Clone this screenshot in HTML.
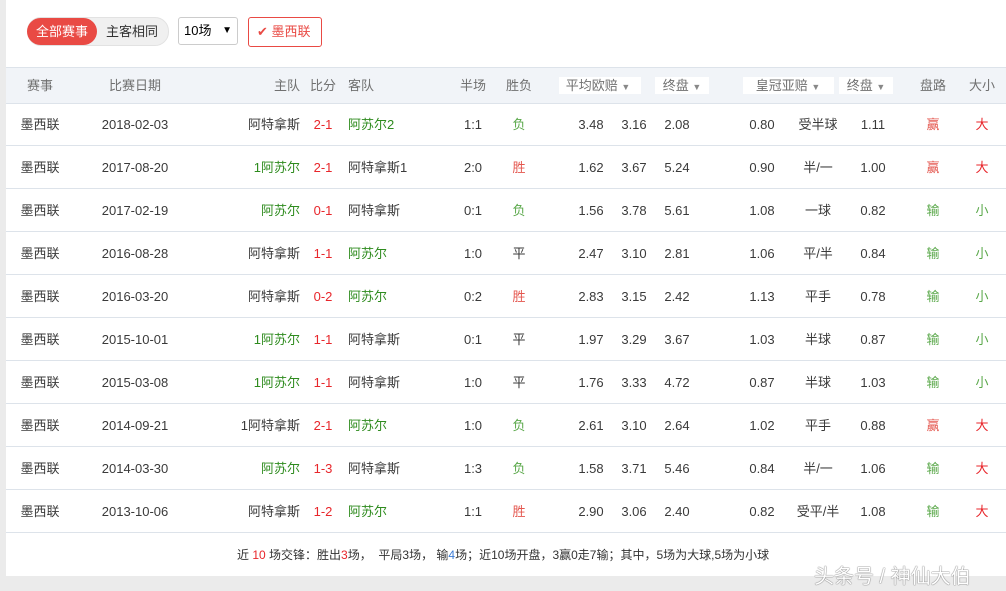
<!DOCTYPE html>
<html><head><meta charset="utf-8"><style>
body{margin:0;width:1006px;height:591px;background:#fff;font-family:"Liberation Sans","Noto Sans CJK SC",sans-serif;font-size:13px;color:#3a3a3a;position:relative;overflow:hidden}
.ab{position:absolute}
.lb{left:0;top:0;width:6px;height:591px;background:#ebebeb}
.bot{left:0;top:576px;width:1006px;height:15px;background:#ebebeb}
.hd{left:6px;top:67px;width:1000px;height:35px;background:#f1f4f8;border-top:1px solid #dde3ea;border-bottom:1px solid #dde3ea}
.row{position:absolute;left:6px;width:1000px;height:42px;border-bottom:1px solid #dde3ea}
.c{position:absolute;top:0;line-height:43px;white-space:nowrap;transform:translateX(-50%)}
.r{position:absolute;top:0;line-height:43px;white-space:nowrap;transform:translateX(-100%)}
.l{position:absolute;top:0;line-height:43px;white-space:nowrap}
.hd span{line-height:35px;color:#707070}
.g{color:#2e8b1e}.red{color:#e8262b}.rd2{color:#e4574f}.g2{color:#5aa84a}
.box{position:absolute;top:9px;height:17px;background:#fff}
small{color:#888}
</style></head><body>
<div class="ab lb"></div><div class="ab bot"></div>
<div class="ab" style="left:27px;top:17px;width:140px;height:27px;border-radius:14px;background:#f0f0f0;border:1px solid #e2e2e2"></div>
<div class="ab" style="left:27px;top:18px;width:70px;height:27px;border-radius:14px;background:#e94a44;color:#fff;line-height:27px;text-align:center">全部赛事</div>
<div class="ab" style="left:97px;top:18px;width:70px;line-height:27px;text-align:center;color:#333">主客相同</div>
<div class="ab" style="left:178px;top:17px;width:58px;height:26px;border:1px solid #ccc;border-radius:3px;line-height:26px;color:#000"><span style="margin-left:5px">10场</span><span style="position:absolute;right:5px;font-size:10px">▼</span></div>
<div class="ab" style="left:248px;top:17px;width:72px;height:28px;border:1px solid #e94a44;border-radius:3px;line-height:28px;color:#e94a44"><span style="margin-left:8px">✔</span> 墨西联</div>
<div class="ab hd">
<span class="c" style="left:34px">赛事</span><span class="c" style="left:129px">比赛日期</span><span class="r" style="left:294px">主队</span><span class="c" style="left:317px">比分</span><span class="l" style="left:342px">客队</span><span class="c" style="left:467px">半场</span><span class="c" style="left:513px">胜负</span>
<div class="box" style="left:553px;width:82px"></div><span class="c" style="left:592px">平均欧赔 <small style="font-size:9px">▼</small></span>
<div class="box" style="left:649px;width:54px"></div><span class="c" style="left:676px">终盘 <small style="font-size:9px">▼</small></span>
<div class="box" style="left:737px;width:91px"></div><span class="c" style="left:782px">皇冠亚赔 <small style="font-size:9px">▼</small></span>
<div class="box" style="left:833px;width:54px"></div><span class="c" style="left:860px">终盘 <small style="font-size:9px">▼</small></span>
<span class="c" style="left:927px">盘路</span><span class="c" style="left:976px">大小</span>
</div>

<div class="row" style="top:103px"><span class="c" style="left:34px">墨西联</span><span class="c" style="left:129px">2018-02-03</span><span class="r" style="left:294px">阿特拿斯</span><span class="c red" style="left:317px">2-1</span><span class="l g" style="left:342px">阿苏尔2</span><span class="c" style="left:467px">1:1</span><span class="c g2" style="left:513px">负</span><span class="c" style="left:585px">3.48</span><span class="c" style="left:628px">3.16</span><span class="c" style="left:671px">2.08</span><span class="c" style="left:756px">0.80</span><span class="c" style="left:812px">受半球</span><span class="c" style="left:867px">1.11</span><span class="c rd2" style="left:927px">赢</span><span class="c red" style="left:976px">大</span></div>
<div class="row" style="top:146px"><span class="c" style="left:34px">墨西联</span><span class="c" style="left:129px">2017-08-20</span><span class="r g" style="left:294px">1阿苏尔</span><span class="c red" style="left:317px">2-1</span><span class="l" style="left:342px">阿特拿斯1</span><span class="c" style="left:467px">2:0</span><span class="c rd2" style="left:513px">胜</span><span class="c" style="left:585px">1.62</span><span class="c" style="left:628px">3.67</span><span class="c" style="left:671px">5.24</span><span class="c" style="left:756px">0.90</span><span class="c" style="left:812px">半/一</span><span class="c" style="left:867px">1.00</span><span class="c rd2" style="left:927px">赢</span><span class="c red" style="left:976px">大</span></div>
<div class="row" style="top:189px"><span class="c" style="left:34px">墨西联</span><span class="c" style="left:129px">2017-02-19</span><span class="r g" style="left:294px">阿苏尔</span><span class="c red" style="left:317px">0-1</span><span class="l" style="left:342px">阿特拿斯</span><span class="c" style="left:467px">0:1</span><span class="c g2" style="left:513px">负</span><span class="c" style="left:585px">1.56</span><span class="c" style="left:628px">3.78</span><span class="c" style="left:671px">5.61</span><span class="c" style="left:756px">1.08</span><span class="c" style="left:812px">一球</span><span class="c" style="left:867px">0.82</span><span class="c g2" style="left:927px">输</span><span class="c g2" style="left:976px">小</span></div>
<div class="row" style="top:232px"><span class="c" style="left:34px">墨西联</span><span class="c" style="left:129px">2016-08-28</span><span class="r" style="left:294px">阿特拿斯</span><span class="c red" style="left:317px">1-1</span><span class="l g" style="left:342px">阿苏尔</span><span class="c" style="left:467px">1:0</span><span class="c" style="left:513px">平</span><span class="c" style="left:585px">2.47</span><span class="c" style="left:628px">3.10</span><span class="c" style="left:671px">2.81</span><span class="c" style="left:756px">1.06</span><span class="c" style="left:812px">平/半</span><span class="c" style="left:867px">0.84</span><span class="c g2" style="left:927px">输</span><span class="c g2" style="left:976px">小</span></div>
<div class="row" style="top:275px"><span class="c" style="left:34px">墨西联</span><span class="c" style="left:129px">2016-03-20</span><span class="r" style="left:294px">阿特拿斯</span><span class="c red" style="left:317px">0-2</span><span class="l g" style="left:342px">阿苏尔</span><span class="c" style="left:467px">0:2</span><span class="c rd2" style="left:513px">胜</span><span class="c" style="left:585px">2.83</span><span class="c" style="left:628px">3.15</span><span class="c" style="left:671px">2.42</span><span class="c" style="left:756px">1.13</span><span class="c" style="left:812px">平手</span><span class="c" style="left:867px">0.78</span><span class="c g2" style="left:927px">输</span><span class="c g2" style="left:976px">小</span></div>
<div class="row" style="top:318px"><span class="c" style="left:34px">墨西联</span><span class="c" style="left:129px">2015-10-01</span><span class="r g" style="left:294px">1阿苏尔</span><span class="c red" style="left:317px">1-1</span><span class="l" style="left:342px">阿特拿斯</span><span class="c" style="left:467px">0:1</span><span class="c" style="left:513px">平</span><span class="c" style="left:585px">1.97</span><span class="c" style="left:628px">3.29</span><span class="c" style="left:671px">3.67</span><span class="c" style="left:756px">1.03</span><span class="c" style="left:812px">半球</span><span class="c" style="left:867px">0.87</span><span class="c g2" style="left:927px">输</span><span class="c g2" style="left:976px">小</span></div>
<div class="row" style="top:361px"><span class="c" style="left:34px">墨西联</span><span class="c" style="left:129px">2015-03-08</span><span class="r g" style="left:294px">1阿苏尔</span><span class="c red" style="left:317px">1-1</span><span class="l" style="left:342px">阿特拿斯</span><span class="c" style="left:467px">1:0</span><span class="c" style="left:513px">平</span><span class="c" style="left:585px">1.76</span><span class="c" style="left:628px">3.33</span><span class="c" style="left:671px">4.72</span><span class="c" style="left:756px">0.87</span><span class="c" style="left:812px">半球</span><span class="c" style="left:867px">1.03</span><span class="c g2" style="left:927px">输</span><span class="c g2" style="left:976px">小</span></div>
<div class="row" style="top:404px"><span class="c" style="left:34px">墨西联</span><span class="c" style="left:129px">2014-09-21</span><span class="r" style="left:294px">1阿特拿斯</span><span class="c red" style="left:317px">2-1</span><span class="l g" style="left:342px">阿苏尔</span><span class="c" style="left:467px">1:0</span><span class="c g2" style="left:513px">负</span><span class="c" style="left:585px">2.61</span><span class="c" style="left:628px">3.10</span><span class="c" style="left:671px">2.64</span><span class="c" style="left:756px">1.02</span><span class="c" style="left:812px">平手</span><span class="c" style="left:867px">0.88</span><span class="c rd2" style="left:927px">赢</span><span class="c red" style="left:976px">大</span></div>
<div class="row" style="top:447px"><span class="c" style="left:34px">墨西联</span><span class="c" style="left:129px">2014-03-30</span><span class="r g" style="left:294px">阿苏尔</span><span class="c red" style="left:317px">1-3</span><span class="l" style="left:342px">阿特拿斯</span><span class="c" style="left:467px">1:3</span><span class="c g2" style="left:513px">负</span><span class="c" style="left:585px">1.58</span><span class="c" style="left:628px">3.71</span><span class="c" style="left:671px">5.46</span><span class="c" style="left:756px">0.84</span><span class="c" style="left:812px">半/一</span><span class="c" style="left:867px">1.06</span><span class="c g2" style="left:927px">输</span><span class="c red" style="left:976px">大</span></div>
<div class="row" style="top:490px"><span class="c" style="left:34px">墨西联</span><span class="c" style="left:129px">2013-10-06</span><span class="r" style="left:294px">阿特拿斯</span><span class="c red" style="left:317px">1-2</span><span class="l g" style="left:342px">阿苏尔</span><span class="c" style="left:467px">1:1</span><span class="c rd2" style="left:513px">胜</span><span class="c" style="left:585px">2.90</span><span class="c" style="left:628px">3.06</span><span class="c" style="left:671px">2.40</span><span class="c" style="left:756px">0.82</span><span class="c" style="left:812px">受平/半</span><span class="c" style="left:867px">1.08</span><span class="c g2" style="left:927px">输</span><span class="c red" style="left:976px">大</span></div>

<div class="ab" style="left:237px;top:546px;font-size:12px;color:#333;white-space:nowrap">近 <span style="color:#e8262b">10</span> 场交锋：胜出<span style="color:#e8262b">3</span>场，&nbsp; 平局3场，&nbsp;输<span style="color:#3b7bd6">4</span>场；近10场开盘，3赢0走7输；其中，5场为大球,5场为小球</div>
<div class="ab" style="left:814px;top:560px;font-size:20px;color:#fff;text-shadow:0 0 1px #777,0 0 1px #555;white-space:nowrap">头条号 / 神仙大伯</div>
</body></html>
